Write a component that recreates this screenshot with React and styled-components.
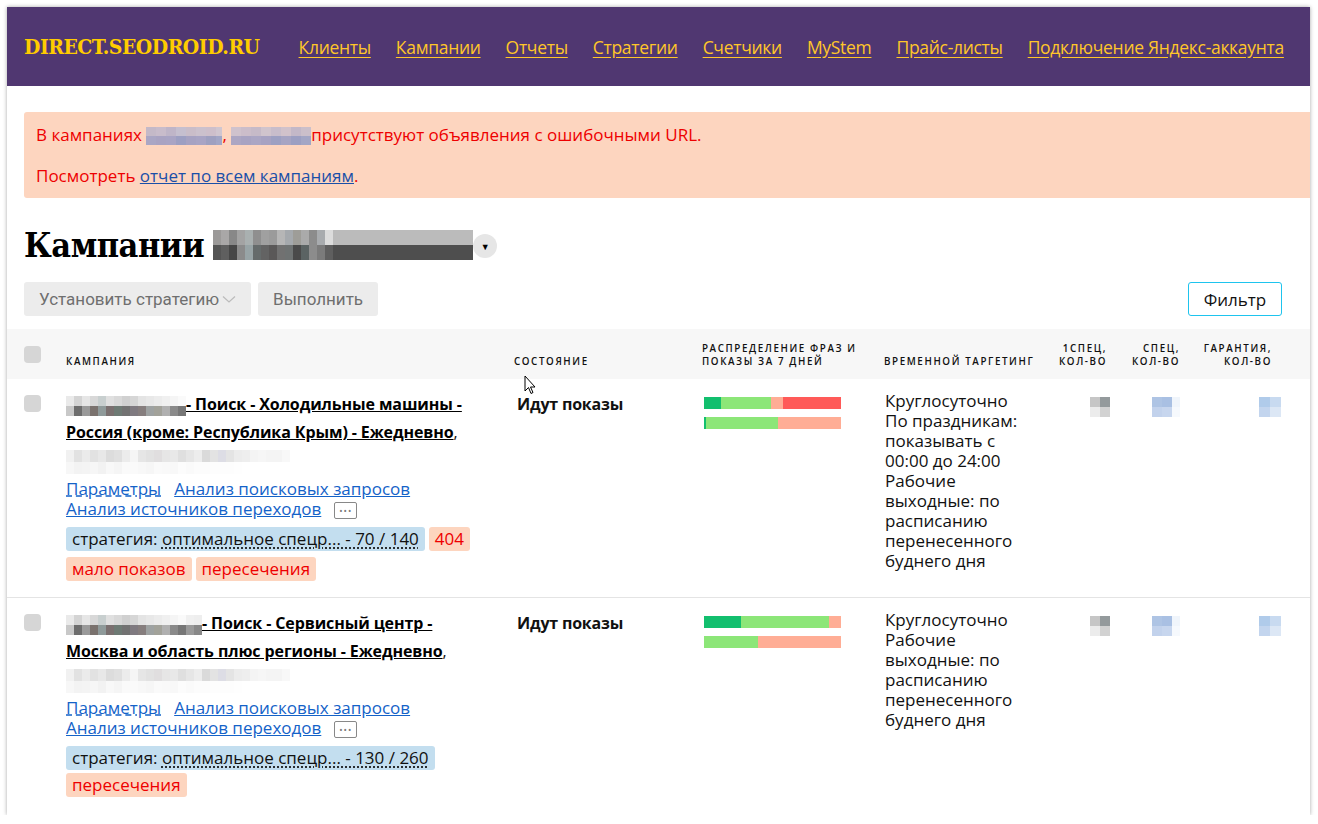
import React from "react";
import styled, { createGlobalStyle } from "styled-components";

const GlobalStyle = createGlobalStyle`
  html, body {
    margin: 0;
    padding: 0;
    background: #fff;
  }
  body {
    font-family: "Open Sans", "Noto Sans", sans-serif;
    color: #111;
  }
`;

const stripes = (colors, step) =>
  `linear-gradient(90deg, ${colors
    .map((c, i) => `${c} ${i * step}px ${(i + 1) * step}px`)
    .join(", ")})`;

const Frame = styled.div`
  position: relative;
  margin: 7px 8px 0 7px;
  height: 808px;
  overflow: hidden;
  background: #fff;
  box-shadow: 0 0 4px rgba(0, 0, 0, 0.35);
`;

const Header = styled.header`
  display: flex;
  align-items: center;
  height: 79px;
  padding: 0 17px;
  background: #503771;
  white-space: nowrap;
`;

const Logo = styled.div`
  flex-shrink: 0;
  font-family: "DejaVu Serif", "Liberation Serif", serif;
  font-weight: bold;
  font-stretch: condensed;
  font-size: 21px;
  letter-spacing: -0.5px;
  color: #ffcc00;
  margin-right: 39px;
`;

const Nav = styled.nav`
  display: flex;
  flex-shrink: 0;
  gap: 25px;
`;

const NavLink = styled.a`
  font-size: 17.5px;
  color: #ffc629;
  text-decoration: underline;
  text-underline-offset: 3px;
  letter-spacing: -0.3px;
`;

const Main = styled.main`
  padding: 26px 0 0 17px;
`;

const Alert = styled.div`
  background: #fdd5bf;
  padding: 12px 12px 11px;
  color: #ee0000;
  font-size: 17px;
  line-height: 22px;
  border-radius: 3px 0 0 3px;
  p {
    margin: 0;
  }
  p + p {
    margin-top: 19px;
  }
`;

const Blur = styled.span`
  display: inline-block;
  vertical-align: middle;
  width: ${(p) => p.$w}px;
  height: ${(p) => p.$h}px;
  background: ${(p) => stripes(p.$top, p.$step)} top left / 100% 50% no-repeat,
    ${(p) => stripes(p.$bottom, p.$step)} bottom left / 100% 50% no-repeat;
`;

const AlertLink = styled.a`
  color: #1a4fa8;
  text-decoration: underline;
`;

const TitleRow = styled.div`
  display: flex;
  align-items: center;
  margin-top: 27px;
  height: 40px;
`;

const PageTitle = styled.h1`
  margin: 0 9px 0 0;
  font-family: "DejaVu Serif", "Liberation Serif", serif;
  font-stretch: condensed;
  font-weight: bold;
  font-size: 34px;
  letter-spacing: -0.5px;
  color: #000;
`;

const RoundToggle = styled.span`
  display: inline-flex;
  align-items: center;
  justify-content: center;
  width: 24px;
  height: 24px;
  border-radius: 50%;
  background: #e6e6e6;
  font-size: 9px;
  color: #000;
  margin-top: 2px;
`;

const Toolbar = styled.div`
  display: flex;
  align-items: center;
  gap: 7px;
  margin-top: 17px;
  padding-right: 28px;
`;

const GrayButton = styled.button`
  display: inline-flex;
  align-items: center;
  gap: 3px;
  height: 34px;
  padding: 0 15px;
  border: none;
  border-radius: 3px;
  background: #ececec;
  color: #6f6f6f;
  font-family: Roboto, "Liberation Sans", sans-serif;
  font-size: 17px;
`;

const FilterButton = styled.button`
  margin-left: auto;
  height: 34px;
  width: 94px;
  border: 1px solid #1ec4ee;
  border-radius: 3px;
  background: #fff;
  color: #111;
  font-family: "Open Sans", sans-serif;
  font-size: 17px;
`;

const Table = styled.div`
  margin: 13px 0 0 -17px;
`;

const Grid = styled.div`
  display: grid;
  grid-template-columns: 59px 448px 188px 182px 158px 65px 73px 92px 1fr;
`;

const HeadRow = styled(Grid)`
  height: 50px;
  background: #f7f7f7;
  align-items: end;
  padding-bottom: 11px;
  box-sizing: border-box;
`;

const HeadCell = styled.div`
  font-size: 9.8px;
  font-weight: 600;
  letter-spacing: 1.6px;
  line-height: 13px;
  text-transform: uppercase;
  color: #111;
  text-align: ${(p) => (p.$right ? "right" : "left")};
`;

const Check = styled.span`
  display: block;
  width: 17px;
  height: 17px;
  border-radius: 4px;
  background: #d6d6d6;
  margin-left: 17px;
  margin-bottom: ${(p) => (p.$head ? "5px" : "0")};
`;

const Row = styled(Grid)`
  height: 219px;
  border-bottom: 1px solid #e4e4e4;
  padding-top: 16px;
  box-sizing: border-box;
  align-items: start;
`;

const Campaign = styled.div`
  font-size: 17px;
`;

const Title = styled.div`
  line-height: 28px;
  margin-top: -5px;
  font-size: 16px;
  a {
    color: #000;
    font-weight: bold;
    text-decoration: underline;
    letter-spacing: -0.1px;
  }
`;

const Links = styled.div`
  margin-top: 5px;
  line-height: 20px;
`;

const BlueLink = styled.a`
  color: #1462c8;
  text-decoration: underline;
  text-decoration-style: ${(p) => (p.$dashed ? "dashed" : "solid")};
  margin-right: 13px;
`;

const MoreButton = styled.span`
  display: inline-flex;
  align-items: center;
  justify-content: center;
  vertical-align: middle;
  width: 21px;
  height: 15px;
  border: 1px solid #888;
  border-radius: 2px;
  font-size: 9px;
  letter-spacing: 1px;
  color: #777;
  line-height: 1;
`;

const Tags = styled.div`
  display: flex;
  flex-wrap: wrap;
  gap: 3px 4px;
  margin-top: 8px;
  width: 430px;
`;

const Tag = styled.span`
  display: inline-block;
  padding: 0 6px;
  height: 24px;
  line-height: 24px;
  border-radius: 3px;
  font-size: 17px;
  background: ${(p) => (p.$info ? "#c3deef" : "#fdd5bf")};
  color: ${(p) => (p.$info ? "#111" : "#ee0000")};
  span {
    text-decoration: underline dotted;
    text-underline-offset: 3px;
  }
`;

const State = styled.div`
  font-size: 16px;
  font-weight: bold;
  padding-left: 3px;
  margin-top: -2px;
  letter-spacing: -0.2px;
`;

const Bars = styled.div`
  display: flex;
  flex-direction: column;
  gap: 8px;
  padding-left: 2px;
  margin-top: 2px;
`;

const Bar = styled.div`
  display: flex;
  width: 137px;
  height: 12px;
`;

const Seg = styled.span`
  display: block;
  height: 100%;
  background: ${(p) => p.$c};
`;

const Targeting = styled.div`
  font-size: 17px;
  line-height: 20px;
  padding: 0 8px 0 1px;
  margin-top: -4px;
`;

const Num = styled.div`
  display: flex;
  justify-content: flex-end;
  margin-top: 2px;
  margin-right: ${(p) => p.$shift || 0}px;
`;

const Cursor = styled.svg`
  position: absolute;
  left: 517px;
  top: 368px;
`;

const COLORS = {
  dark: "#12bf6e",
  light: "#8ce678",
  salmon: "#ffad95",
  red: "#ff5a58",
};

const grayTop = ["#9c9a99", "#a9a7a7", "#888", "#a3a3a3", "#a9b0b0", "#8f8f8f", "#a0a0a0", "#9b9b9b", "#b6b6b6", "#a5a9ad", "#9e9d98", "#aaa", "#8c8c8c", "#a8abae", "#dcdcdc", "#bbb"];
const grayBot = ["#555", "#5f5f5f", "#474747", "#8b8b8b", "#98a4a6", "#656b6b", "#636363", "#5a5858", "#717171", "#6e7272", "#4a4a4a", "#5b6363", "#8c8c8c", "#7b7b7b", "#5f5f5f", "#4e4e4e"];
const paleTop = ["#f1f1f1", "#e2e2e2", "#ebebeb", "#e2e2e2", "#e8e8e8", "#dcdcdc", "#e0e0e0", "#ececec", "#f5f5f5", "#e6e6e6", "#e2e2e2", "#e0dedf", "#e6e6e6", "#e8e8e8", "#dfdfdf", "#e6e6e6", "#ededed", "#dadada", "#e3e3e3", "#dddde5", "#e4e4e4", "#ececec", "#eeeeee", "#f4f4f4", "#f6f6f6", "#f4f4f4", "#f4f4f4", "#f8f8f8"];
const paleBot = ["#f7f7f7", "#f3f3f3", "#f4f4f4", "#f6f6f6", "#f2f2f2", "#f8f8f8", "#f5f5f5", "#fafafa", "#fafafa", "#f8f8f8", "#f6f6f6", "#fafafa", "#f9f9f9", "#f8f8f8", "#fcfcfc", "#fafafa", "#fcfcfc", "#fcfcfc", "#fdfdfd", "#fdfdfd", "#fdfdfd", "#fefefe", "#fff", "#fff", "#fff", "#fff", "#fff", "#fff"];
const nameTop = ["#eaeaea", "#d4d4d4", "#e6e6e6", "#d8d8d8", "#c8cfcf", "#e0e0e0", "#d9d9d9", "#d0d0d0", "#d6d6d6", "#e4e4e4", "#e8e8e8", "#ececec", "#f0f0f0", "#f5f5f5", "#fafafa", "#f0f0f0", "#eee"];
const nameBot = ["#c8c8c8", "#6d6d6d", "#9a9a9a", "#7a726e", "#8f9a9a", "#7a7070", "#6e7a74", "#727272", "#7f7a80", "#867e7e", "#9ea2a2", "#a2a29a", "#b0b0b0", "#8a8a8a", "#777", "#9a9a9a", "#888"];
const blueTop = ["#aec4e4", "#a9c0e3", "#f0f5fb"];
const blueBot = ["#c2d2ec", "#c7d6ee", "#f6f9fd"];

const Mosaic = ({ w, h = 20, step = 8, top, bottom }) => (
  <Blur $w={w} $h={h} $step={step} $top={top} $bottom={bottom} />
);

const Row1 = {
  name: "- Поиск - Холодильные машины -",
  name2: "Россия (кроме: Республика Крым) - Ежедневно",
  strategy: "оптимальное спецр... - 70 / 140",
  tags: ["404"],
  tags2: ["мало показов", "пересечения"],
  bars: [
    [["dark", 17], ["light", 50], ["salmon", 12], ["red", 58]],
    [["dark", 2], ["light", 72], ["salmon", 63]],
  ],
  targeting: [
    "Круглосуточно",
    "По праздникам: показывать с 00:00 до 24:00",
    "Рабочие выходные: по расписанию перенесенного буднего дня",
  ],
};

const Row2 = {
  name: "- Поиск - Сервисный центр -",
  name2: "Москва и область плюс регионы - Ежедневно",
  strategy: "оптимальное спецр... - 130 / 260",
  tags: [],
  tags2: ["пересечения"],
  bars: [
    [["dark", 37], ["light", 88], ["salmon", 12]],
    [["light", 54], ["salmon", 83]],
  ],
  targeting: [
    "Круглосуточно",
    "Рабочие выходные: по расписанию перенесенного буднего дня",
  ],
};

function CampaignRow({ data, blurW }) {
  return (
    <Row>
      <Check />
      <Campaign>
        <Title>
          <Mosaic w={blurW} top={nameTop} bottom={nameBot} />
          <a>{data.name}</a>
          <br />
          <a>{data.name2}</a>,
          <br />
          <Mosaic w={224} h={24} top={paleTop} bottom={paleBot} />
        </Title>
        <Links>
          <BlueLink $dashed>Параметры</BlueLink>
          <BlueLink>Анализ поисковых запросов</BlueLink>
          <br />
          <BlueLink>Анализ источников переходов</BlueLink>
          <MoreButton>•••</MoreButton>
        </Links>
        <Tags>
          <Tag $info>
            стратегия: <span>{data.strategy}</span>
          </Tag>
          {data.tags.map((t) => (
            <Tag key={t}>{t}</Tag>
          ))}
          {data.tags.length > 0 && <div style={{ flexBasis: "100%", height: 0 }} />}
          {data.tags2.map((t) => (
            <Tag key={t}>{t}</Tag>
          ))}
        </Tags>
      </Campaign>
      <State>Идут показы</State>
      <Bars>
        {data.bars.map((bar, i) => (
          <Bar key={i}>
            {bar.map(([c, w], j) => (
              <Seg key={j} $c={COLORS[c]} style={{ width: w }} />
            ))}
          </Bar>
        ))}
      </Bars>
      <Targeting>
        {data.targeting.map((t) => (
          <div key={t}>{t}</div>
        ))}
      </Targeting>
      <Num $shift={-3}>
        <Mosaic w={20} step={10} top={["#c6c6c6", "#949a9c"]} bottom={["#ececec", "#d2d2d2"]} />
      </Num>
      <Num>
        <Mosaic w={28} step={10} top={blueTop} bottom={blueBot} />
      </Num>
      <Num $shift={-9}>
        <Mosaic w={22} step={11} top={["#b0cbea", "#c8daf0"]} bottom={["#c3d5ee", "#dce7f5"]} />
      </Num>
      <div />
    </Row>
  );
}

export default function App() {
  return (
    <>
      <GlobalStyle />
      <Frame>
        <Header>
          <Logo>DIRECT.SEODROID.RU</Logo>
          <Nav>
            <NavLink>Клиенты</NavLink>
            <NavLink>Кампании</NavLink>
            <NavLink>Отчеты</NavLink>
            <NavLink>Стратегии</NavLink>
            <NavLink>Счетчики</NavLink>
            <NavLink>MyStem</NavLink>
            <NavLink>Прайс-листы</NavLink>
            <NavLink>Подключение Яндекс-аккаунта</NavLink>
          </Nav>
        </Header>
        <Main>
          <Alert>
            <p>
              В кампаниях{" "}
              <Mosaic w={76} h={18} top={["#c4b9c8", "#c8bccb", "#bfb5c8", "#c5bfcf", "#c9bdc9", "#cbc1cd", "#cdbfcb", "#d0c6d0"]} bottom={["#aaa6c4", "#a9a3c2", "#a9a4c4", "#9d9fc2", "#a6a2c2", "#a8a4c4", "#9ea0c0", "#a2a6c6"]} step={10} />
              ,{" "}
              <Mosaic w={80} h={18} top={["#cfc2cd", "#cbbdca", "#c6bac8", "#d0c4cd", "#c8bdcb", "#d1c2cb", "#c3b8c8", "#cbbfca"]} bottom={["#aca6c3", "#a8a3c2", "#aba6c4", "#a7a2c2", "#9da0c2", "#a6a4c3", "#9c9fc2", "#a3a6c5"]} step={10} />
              присутствуют объявления с ошибочными URL.
            </p>
            <p>
              Посмотреть <AlertLink>отчет по всем кампаниям</AlertLink>.
            </p>
          </Alert>
          <TitleRow>
            <PageTitle>Кампании</PageTitle>
            <Mosaic w={260} h={30} step={8} top={grayTop} bottom={grayBot} />
            <RoundToggle>▼</RoundToggle>
          </TitleRow>
          <Toolbar>
            <GrayButton>
              Установить стратегию
              <svg width="14" height="9" viewBox="0 0 14 9">
                <path d="M1 1.5l6 5.5 6-5.5" fill="none" stroke="#bbb" strokeWidth="1.2" />
              </svg>
            </GrayButton>
            <GrayButton>Выполнить</GrayButton>
            <FilterButton>Фильтр</FilterButton>
          </Toolbar>
          <Table>
            <HeadRow>
              <Check $head />
              <HeadCell>Кампания</HeadCell>
              <HeadCell>Состояние</HeadCell>
              <HeadCell>
                Распределение фраз и
                <br />
                показы за 7 дней
              </HeadCell>
              <HeadCell>Временной таргетинг</HeadCell>
              <HeadCell $right>
                1спец,
                <br />
                кол-во
              </HeadCell>
              <HeadCell $right>
                спец,
                <br />
                кол-во
              </HeadCell>
              <HeadCell $right>
                гарантия,
                <br />
                кол-во
              </HeadCell>
              <div />
            </HeadRow>
            <CampaignRow data={Row1} blurW={120} />
            <CampaignRow data={Row2} blurW={136} />
          </Table>
        </Main>
        <Cursor width="14" height="20" viewBox="0 0 14 20">
          <path d="M1 1v15l3.5-3.5 2.5 6 2-1-2.5-5.5H11z" fill="#fff" stroke="#000" strokeWidth="1" strokeLinejoin="round" />
        </Cursor>
      </Frame>
    </>
  );
}
